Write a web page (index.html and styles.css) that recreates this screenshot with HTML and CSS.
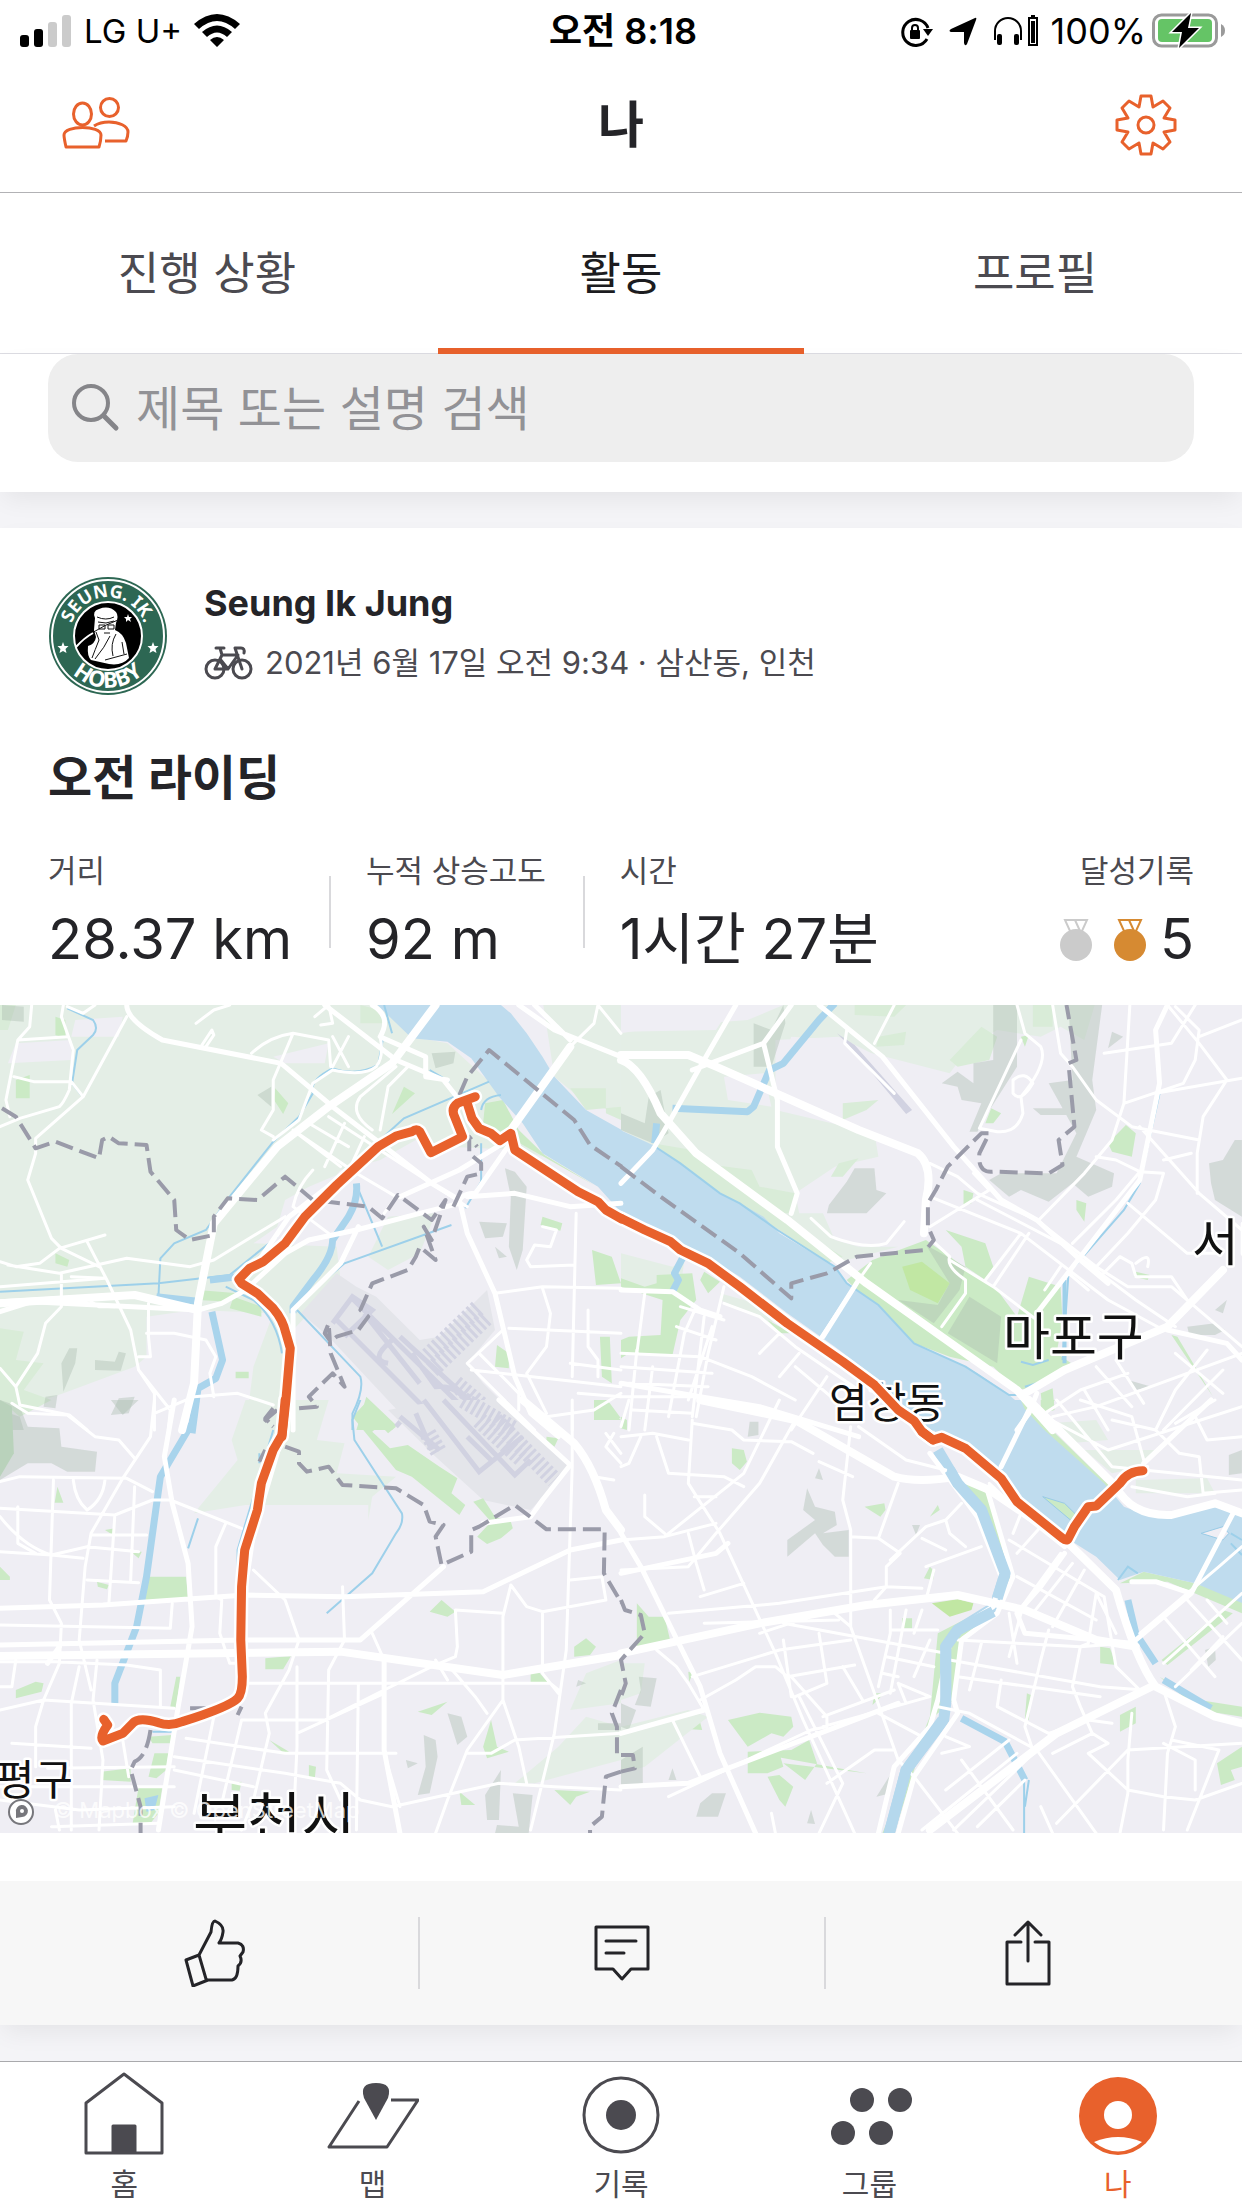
FILE: index.html
```html
<!DOCTYPE html>
<html lang="ko">
<head>
<meta charset="utf-8">
<meta name="viewport" content="width=device-width, initial-scale=1">
<title>나</title>
<link rel="stylesheet" href="styles.css">
</head>
<body>
<div class="status">
  <div class="status-side">
    <svg width="52" height="34" viewBox="0 0 52 34" aria-hidden="true"><rect y="21" width="9" height="12" rx="3"/><rect x="14" y="15" width="9" height="18" rx="3"/><g fill="#cbcbcb"><rect x="28" y="8" width="9" height="25" rx="3"/><rect x="42" y="1" width="9" height="32" rx="3"/></g></svg>
    <span class="carrier">LG U+</span>
    <svg width="46" height="34" viewBox="0 0 46 34" aria-hidden="true"><path d="M0 10Q23-10 46 10L41 15Q23-1 5 15ZM8 18Q23 5 38 18L33 23Q23 14 13 23ZM16 26Q23 20 30 26L23 33Z"/></svg>
  </div>
  <span class="clock">오전 8:18</span>
  <div class="status-side right">
    <svg width="32" height="34" viewBox="0 0 32 34" aria-hidden="true"><path d="M26 25A13 13 0 1 1 27 14" fill="none" stroke="#000" stroke-width="3"/><path d="M22 15H32L27 22Z"/><rect x="9" y="16" width="10" height="9" rx="1"/><path d="M11 17V14A3 3 0 0 1 17 14V17" fill="none" stroke="#000" stroke-width="2"/></svg>
    <svg class="arrow" width="28" height="34" viewBox="0 0 28 34" aria-hidden="true"><path d="M26 4Q28 3 27 6L18 30Q16 33 15 29V18H2Q-1 17 2 15Z"/></svg>
    <svg width="46" height="34" viewBox="0 0 46 34" aria-hidden="true"><path d="M2 26V17A13 13 0 0 1 28 17V26" fill="none" stroke="#000" stroke-width="2"/><rect x="4" y="20" width="5" height="11" rx="2"/><rect x="21" y="20" width="5" height="11" rx="2"/><rect x="36" y="4" width="8" height="27" fill="none" stroke="#000" stroke-width="2"/><rect x="38" y="7" width="4" height="22"/><rect x="38" y="1" width="4" height="2"/></svg>
    <span class="percent">100%</span>
    <svg class="battery" width="74" height="36" viewBox="0 0 74 36" aria-hidden="true"><rect x="1.500" y="2" width="63" height="31" rx="8" fill="none" stroke="#9a9a9a" stroke-width="3"/><rect x="6" y="6" width="54" height="23" rx="4" fill="#65c466"/><path d="M69 11Q73 13 73 17.500T69 24Z" fill="#9a9a9a"/><path d="M39 0L20 19H30L27 35L47 15H36Z" stroke="#fff" stroke-width="3" paint-order="stroke"/></svg>
  </div>
</div>

<header class="topbar">
  <button class="icon-button" type="button" aria-label="친구">
    <svg width="68" height="64" viewBox="0 0 68 64" fill="none" stroke="#e8612c" stroke-width="3" stroke-linejoin="round"><ellipse cx="20.500" cy="21" rx="9" ry="11"/><ellipse cx="47.500" cy="14.500" rx="9" ry="9"/><path d="M4 54Q2 45 2 42C2 32 39 32 39 42Q39 48 37 54ZM32 33Q38 29 47 29C57 29 66 33 66 39Q66 43 64 48H43"/></svg>
  </button>
  <h1>나</h1>
  <button class="icon-button" type="button" aria-label="설정">
    <svg width="62" height="62" viewBox="-31 -31 62 62" fill="none" stroke="#e8612c" stroke-width="3" stroke-linejoin="round"><path d="M-5-29H5L7-18L17-24L24-17L18-7L29-5V5L18 7L24 17L17 24L7 18L5 29H-5L-7 18L-17 24L-24 17L-18 7L-29 5V-5L-18-7L-24-17L-17-24L-7-18Z"/><circle r="8"/></svg>
  </button>
</header>

<nav class="tabs">
  <a href="#progress">진행 상황</a>
  <a href="#activity" class="current" aria-current="page">활동</a>
  <a href="#profile">프로필</a>
</nav>

<main>
  <form class="search" role="search">
    <label class="search-box">
      <svg width="50" height="50" viewBox="0 0 50 50" fill="none" stroke="#858589" stroke-linecap="round" aria-label="검색"><circle cx="19" cy="20" r="17" stroke-width="4"/><path d="M32 33L44 45" stroke-width="5"/></svg>
      <input type="search" placeholder="제목 또는 설명 검색">
    </label>
  </form>

  <article class="card">
    <div class="athlete">
      <svg class="avatar" width="120" height="120" viewBox="0 0 120 120" aria-hidden="true">
        <defs><path id="arc-top" d="M22.300 64A38 38 0 1 1 97.700 64"/><path id="arc-bottom" d="M14 84A52 52 0 0 0 106 84"/></defs>
        <circle cx="60" cy="60" r="59" fill="#2d6753"/><circle cx="60" cy="60" r="56" fill="none" stroke="#fff" stroke-width="2"/>
        <circle cx="60" cy="60" r="34" fill="#000" stroke="#fff" stroke-width="2"/>
        <text class="badge-text"><textPath href="#arc-top" startOffset="50%" text-anchor="middle">SEUNG. IK.</textPath></text>
        <text class="badge-text large"><textPath href="#arc-bottom" startOffset="50%" text-anchor="middle">HOBBY</textPath></text>
        <g fill="#fff"><path d="M15 66l1.500 4h4l-3 3 1 4-3.500-2-3.500 2 1-4-3-3h4z"/><path d="M105 66l1.500 4h4l-3 3 1 4-3.500-2-3.500 2 1-4-3-3h4z"/><path d="M80 38l1 3h3l-2 2 1 3-3-2-2 2v-3l-2-2h3z"/>
        <path d="M47 42Q44 35 51 33Q61 29 68 36Q71 40 68 47L67 54Q75 57 78 67L81 82Q74 90 61 88L43 84Q39 80 40 70Q47 68 48 61L46 54Z"/></g>
        <path d="M28 71Q43 54 70 44M49 41Q58 45 66 41M50 46L58 47L66 45M51 49h6v4h-6zM60 49h6v4h-6zM56 57h6M48 56L51 64Q47 74 44 82M62 60Q57 71 47 83M68 58Q62 68 65 80M57 84L79 78M74 66L76 78" fill="none" stroke="#111"/>
        <path d="M28 71Q36 62 45 57" fill="none" stroke="#fff" stroke-width="2"/>
      </svg>
      <div class="athlete-text">
        <strong>Seung Ik Jung</strong>
        <div class="meta">
          <svg width="50" height="36" viewBox="0 0 50 36" fill="none" stroke="#4b4a50" stroke-width="3" stroke-linecap="round" stroke-linejoin="round" aria-label="라이딩"><circle cx="11" cy="24" r="9"/><circle cx="38" cy="24" r="9"/><path d="M11 24L18 10H34L24 24ZM18 10L16 3M12 3H20M24 24L16 14M38 24L31 3H37Q41 3 40 8"/></svg>
          <span>2021년 6월 17일 오전 9:34 · 삼산동, 인천</span>
        </div>
      </div>
    </div>
    <h2>오전 라이딩</h2>
    <div class="stats">
      <div class="stat"><span class="stat-label">거리</span><span class="stat-value">28.37 km</span></div>
      <div class="stat"><span class="stat-label">누적 상승고도</span><span class="stat-value">92 m</span></div>
      <div class="stat"><span class="stat-label">시간</span><span class="stat-value">1시간 27분</span></div>
      <div class="stat achievements"><span class="stat-label">달성기록</span>
        <span class="stat-value medals">
          <svg width="34" height="44" viewBox="0 0 34 44" fill="#cbcbcb" aria-hidden="true"><circle cx="17" cy="27" r="16"/><path d="M6 2H28L23 13H11ZM16 2L21 13" fill="none" stroke="#cbcbcb" stroke-width="2"/></svg>
          <svg width="34" height="44" viewBox="0 0 34 44" fill="#d68a32" aria-hidden="true"><circle cx="17" cy="27" r="16"/><path d="M6 2H28L23 13H11ZM16 2L21 13" fill="none" stroke="#d68a32" stroke-width="2"/></svg>
          <span>5</span>
        </span>
      </div>
    </div>

    <svg class="map" viewBox="0 0 1242 828" role="img" aria-label="라이딩 경로 지도">
      <rect width="1242" height="828" fill="#efeef4"/>

      <!-- Land cover, one group per map tile -->
      <g transform="translate(0 -5) scale(.396 .33333)">
        <path class="grass" d="M0 0H960L1040 110L1130 130L1240 250L1310 390L1370 470L1320 450L1130 440L1050 420L960 480L900 500L780 560L720 600L700 680L640 730L850 740L860 840L740 990L700 1290H620L640 1100L690 940L490 930L370 950V1070L340 1100L160 1180L60 1220L0 1130ZM1370 0H1568V340L1480 310L1400 230ZM980 650L1100 640L1060 760L980 810L930 770Z"/>
        <path fill="#efeef4" d="M190 60L310 50L300 110L180 110ZM40 130L180 120V180L20 190ZM690 170L830 130L820 190L720 190ZM860 510L980 480L1030 500L960 590L800 600Z"/>
        <path class="meadow" d="M0 985L60 995L40 1080L110 1090L60 1170L130 1200L50 1250L0 1200ZM910 15L960 30L980 70H910ZM1440 265H1530V340L1568 360V320L1480 330ZM0 15L40 15L20 90L0 90Z"/>
        <path class="park" d="M140 50L165 60V115L140 105ZM40 240L75 225L75 295L40 295ZM695 265L728 310L715 342L692 300ZM1020 260L1048 280L990 342ZM1225 310L1270 300L1310 390L1375 465L1500 555L1290 415L1220 370ZM500 870L600 880L580 905L500 900ZM590 890L660 920V950L580 925ZM1495 750L1545 770L1568 850L1505 855ZM140 760L175 780L170 800L140 790ZM1370 650L1420 670L1415 692L1365 675ZM1255 1035L1285 1060V1105L1250 1100ZM595 1115H628V1135H595ZM925 1190L1000 1275L990 1290H900ZM1515 1010H1540L1545 1150L1520 1130ZM1510 1200L1540 1210L1568 1255L1520 1250Z"/>
        <path class="hill" d="M5 15L60 20V65L5 60ZM1090 160L1150 155L1145 190L1100 205ZM650 285L685 260V320ZM1275 505L1300 515L1330 560L1320 750L1305 810L1285 740L1290 590ZM1210 665L1280 670L1270 710L1225 715ZM1250 740L1280 770L1260 775ZM175 1045H195L190 1090L160 1175L155 1090ZM240 1080L290 1085L300 1055L318 1060L305 1112L240 1110ZM115 1190L145 1185L140 1225L110 1220ZM300 1195L340 1190L325 1240L280 1245ZM0 1230L50 1250L60 1290H0Z"/>
        <path class="airport" d="M850 820L900 860L950 890L1060 1020L1110 1010L1230 870L1250 990L1180 1090L1220 1150L1340 1290H1050L830 1010L760 940Z"/>
        <path class="runway" d="M885 890L1320 1400M850 960L1220 1400M840 970L890 890L940 930L870 1010M1010 1010L1350 1380M990 1020Q930 1080 980 1090M1040 1060L1100 1160Q1180 1150 1210 1290M920 940L1060 1150M1010 1250L1110 1350M1030 1240L1000 1280"/>
        <path class="apron" d="M1070 1080L1210 920M1090 1110L1230 950M1150 1150L1290 1290M1180 1240L1260 1290"/>
      </g>
      <g transform="translate(621 -5) scale(.396 .33333)">
        <path class="grass" d="M0 100L100 80L320 60L440 0H1200L1170 120L1110 80L1060 110L950 90L880 140L830 220L700 180L600 150L560 120L430 110L400 200L390 330L640 400L650 470L540 500L440 580L450 640L510 640L540 720L600 740L700 740L540 790L350 650L150 480L0 390ZM250 880L400 930L380 970L250 900ZM130 800L160 780L150 870H0V760Z"/>
        <path fill="#efeef4" d="M0 15H280L240 90L0 95ZM390 120L550 110L700 200L800 260L760 320L670 310L550 340L500 300L390 300ZM260 230L360 220L380 320L270 300Z"/>
        <path class="meadow" d="M590 15H720L690 50L590 45ZM650 110L720 95L715 135L645 140ZM830 180L910 80L950 110L930 180L850 200ZM1040 15H1090V80H1040ZM200 490L330 510L350 560L440 580L430 640L390 640ZM80 430L180 450L400 650L560 770L520 790L400 690L240 570ZM550 490L600 475L560 530L530 530ZM560 310L650 300L620 330L560 360Z"/>
        <path class="park" d="M635 780L770 720L950 870L1000 950L1030 830L1110 860L1115 960L1100 1060L1150 1100L1050 1160L1000 1170L940 1100L830 1070L740 1030L620 900L570 840ZM820 690L920 730L940 800L920 840L870 800L860 740ZM865 570L890 580L885 610L865 615ZM1230 430L1275 375L1300 400L1290 470L1240 455ZM920 370L935 325L960 340L940 370ZM1150 600L1175 610L1170 665L1150 630ZM90 825L180 820L190 900L150 960L130 1065L20 1060L0 1075V1020L20 1010L100 1005L105 900L0 860V835L60 860L90 850ZM210 815L250 845L220 880L200 840ZM1300 815L1335 825L1330 840L1295 830ZM1390 1005L1405 1010L1495 1190ZM1060 1180L1090 1165L1095 1230L1065 1240ZM370 960L430 1000L400 1000ZM1010 110L1030 105L1020 140Z"/>
        <path fill="#c1e7a3" d="M710 800L760 785L830 850L800 910L730 870Z"/>
        <path class="hill" d="M0 340L60 370L70 290L100 270L120 400L80 430L0 390ZM335 70L380 90L410 15L415 70L380 200H335ZM940 15H1000L1000 200L920 350L900 395H880L910 310L860 300L850 260L810 250L850 215L890 250L890 190L940 180ZM1130 15H1215L1190 240L1200 330L1150 470L1245 520L1240 560L1180 590L1140 550L1080 605L1010 570L980 590L930 540L960 520L1100 520L1150 400L1080 250L1140 240ZM590 505H640L645 570L670 580L620 640H520L525 615L570 545ZM770 735L870 800L855 870L790 970L700 900L800 915L830 850ZM880 890L960 950L950 1090L825 1000ZM1485 490L1520 480L1550 420H1568V650L1500 600L1490 550ZM1430 980L1500 970L1525 990L1500 1005H1435ZM1500 930L1530 900L1520 940ZM1240 95L1268 110L1230 145ZM1280 1140L1340 1160L1300 1170ZM1040 325H1125V345H1060Z"/>
        <path fill="#d1d2e1" d="M545 100L590 135L735 330L720 342L575 135Z"/>
      </g>
      <g transform="translate(0 395) scale(.396 .33333)">
        <path class="grass" d="M620 0H830L800 120L870 130L850 220L1000 230L940 290L930 360V315H620L490 340L600 180L585 120ZM1480 950L1568 980V1080L1350 1150L1300 1150L1410 1040ZM1480 820L1568 780V910L1440 930Z"/>
        <path class="hill" d="M0 0L50 20L70 80L150 85L155 140L245 155L240 215L170 215L130 190L70 190L0 240ZM280 0H350L310 45ZM1070 1005L1100 1020L1105 1070L1085 1180L1055 1185L1075 1100ZM1130 940L1165 950L1180 1010L1155 1035ZM1025 1080L1055 1090L1030 1105ZM1225 1185L1265 1110L1260 1260H1230ZM1295 1180L1345 1185L1335 1300H1250L1255 1275L1310 1280ZM1510 970H1568V990H1510ZM1460 840L1480 850L1455 860Z"/>
        <path fill="#b9d2bb" d="M0 0L30 20L35 160L0 230Z"/>
        <path class="airport" d="M980 30L1120 0H1280L1440 200L1340 330L1220 300L1100 170Z"/>
        <path class="runway" d="M1070 0L1210 215L1320 110M1120 0L1300 225L1340 180M1010 50L1110 150M1050 40L1090 150M1180 110L1240 180"/>
        <path class="apron" d="M1170 0L1300 90M1250 60L1400 240M1210 60L1320 180M1080 100L1110 160"/>
        <path class="park" d="M930 0L1000 80L980 100L960 75L940 95L985 145L1030 135L1110 200L1155 235L1140 280L1175 315L1160 345L1040 230L1000 210L890 50ZM1195 305L1220 295L1250 350L1290 365L1295 385L1265 415L1230 432L1205 410L1240 365ZM145 260L160 308H138ZM370 530H470L475 600L360 605ZM1380 110L1410 115L1400 140L1380 120ZM0 500L25 530V540H0ZM330 455H358L350 475ZM245 545L275 555L270 568L247 560ZM265 390L290 385L285 405ZM1085 635L1115 600L1150 635L1130 650ZM670 775L735 768L715 808H670ZM1450 740L1480 715L1505 740L1490 765L1450 770ZM40 870L90 845L110 850L105 875L40 895ZM445 830H455L445 925L430 920ZM1340 820L1360 815L1385 850L1340 848ZM1055 935L1130 905L1090 945ZM1240 960L1255 1040L1285 1055L1230 1075L1220 1040ZM680 1020L730 1055L715 1058ZM375 1010L435 1005L430 1030L385 1030ZM390 1060H425L420 1110L395 1135L375 1130ZM255 1115L330 1105V1145L255 1140ZM350 1160H410L400 1240L380 1270H335ZM585 1150L610 1145L605 1172L585 1170ZM780 1095L798 1100L795 1135H780ZM1400 1170L1490 1175L1455 1190L1440 1215ZM1160 1175L1200 1215L1165 1215ZM1500 0H1535L1550 40L1568 60H1500Z"/>
      </g>
      <g transform="translate(621 395) scale(.396 .33333)">
        <path class="park" d="M0 50L15 60V90L0 85ZM1060 0H1095L1080 35H1060ZM280 145L310 150L318 185L300 210L280 190ZM780 350L800 315L805 330ZM615 320L665 310L668 330L655 350ZM765 535L780 500L792 515L788 540ZM40 610L70 650L110 650L125 725L40 740ZM710 655H735V685H710ZM1210 740L1235 745L1250 795L1210 790ZM270 960L350 938L430 950L435 980L410 1010L380 1000L320 1040ZM320 1055L430 1050L475 1020L495 1090L465 1140L410 1090L620 1120ZM320 1055L400 1060L410 1100L370 1120H320ZM370 1130L400 1125L435 1160L415 1220L400 1200ZM100 960L195 945L205 990L140 985ZM640 880L665 880L635 915ZM1025 880L1035 885L1030 960L1020 955ZM1260 945L1300 920L1300 970L1260 995ZM1505 1090L1568 1040V1100L1540 1110L1550 1140L1515 1155ZM1365 780L1520 630L1545 640L1380 795ZM170 815L182 820L172 845Z"/>
        <path class="grass" d="M1080 70L1200 60L1230 120L1130 130ZM1170 150L1350 150L1320 200L1240 220ZM0 980L170 930L220 950L60 1100L0 1120ZM0 790L60 790L50 880L0 900ZM1300 240L1480 235L1500 280L1300 280Z"/>
        <path fill="#cbeac5" d="M1010 0L1270 300L1200 245L1160 190L1010 30ZM1260 550L1320 515L1450 550L1568 600V640L1380 545ZM850 230L930 280L980 480L985 560L940 650L860 710L840 900L780 960L690 1300H660L780 950L800 700L930 620L970 520L900 320ZM1360 830L1460 900L1568 920V950L1460 930Z"/>
        <path fill="#c1e7a3" d="M785 610L850 598L890 610L885 630L830 650Z"/>
        <path class="hill" d="M420 470V420L490 360L460 330L470 265L490 320L540 335L545 375L510 400L575 390V470H540L510 435L490 400ZM325 65H347V105L320 110ZM490 235L500 205L510 240ZM735 375H755L745 405ZM45 830L90 835L75 920L35 915L50 870ZM0 910L38 930L20 990L0 980ZM190 1250L200 1210L230 1180L265 1180L245 1250ZM645 1190L685 1115L680 1180ZM470 1270L480 1230L490 1272ZM120 1140L130 1105L140 1140ZM1475 750L1500 740L1502 780L1483 800ZM1535 165L1568 150V220L1535 225ZM0 1080L55 1040V1150L0 1160Z"/>
      </g>

      <!-- Rivers and streams -->
      <g transform="translate(0 -5) scale(.396 .33333)">
        <path class="water" d="M940 0L1040 115L1130 125L1190 175L1260 290L1320 370L1370 460L1510 560L1570 640V390L1480 330L1400 230L1370 170L1330 100L1290 40L1250 0Z"/>
        <path class="stream" d="M170 25L235 60Q250 85 235 105L195 150L182 250L205 285M970 15L990 100M968 110L955 195Q900 230 840 205Q780 240 790 280L755 350L690 425L580 590L520 690L440 730L405 775L400 890M1085 210L1135 245M1235 245L1020 355L960 420M1215 330Q1220 290 1265 285M1215 430L1215 545L1175 625M0 875L400 850L580 825L700 710M750 930L910 1130Q920 1170 890 1240V1290M740 920L870 790L1140 675M900 555L965 740M570 860L640 900Q700 960 712 1060"/>
        <path class="channel" d="M395 890L510 905M530 840L600 830M900 550Q905 600 880 650L840 720Q840 770 790 840L740 920V940M535 935L562 1080L545 1135L500 1165L485 1300"/>
      </g>
      <g transform="translate(621 -5) scale(.396 .33333)">
        <path class="water" d="M-2 390L80 435L150 490L250 580L300 610L360 650L400 700L540 800L570 850L650 915L740 1030L870 1100L900 1120L980 1185L1010 1215L1070 1292H760L700 1200L640 1130L540 1040L420 940L300 830L230 780L140 740L-2 640Z"/>
        <path class="channel" d="M540 10L500 60L410 190L375 210L335 320L320 335L130 325M155 775L135 820L145 840L130 875M90 370L85 430"/>
        <path class="stream" d="M80 435L150 490L250 580L300 610L395 690L540 800L570 850L650 915L740 1030L870 1100L980 1185H1010M1360 280L1330 440L1310 550L1270 630L1130 820L1115 1080M1010 1085L1040 1095L1080 1080M1020 1160L1050 1150"/>
        <path class="stream wide" d="M1120 840V1090"/>
      </g>
      <g transform="translate(0 395) scale(.396 .33333)">
        <path class="channel" d="M495 0L485 70L405 230L370 530L345 680L290 850V910"/>
        <path class="stream" d="M910 0L890 60L895 120L1015 340Q1020 370 1000 400L940 520L825 640M500 355L475 445M690 90L640 290L600 450V520M385 995H435M655 160V190"/>
        <path fill="#a9d4ec" d="M365 1195L400 1185L390 1230L370 1235Z"/>
      </g>
      <g transform="translate(621 395) scale(.396 .33333)">
        <path class="water" d="M750 0H1010L1020 30L1060 80L1220 250L1270 320L1340 350L1420 340L1480 310L1570 330V610L1450 550L1320 515L1260 540L1200 470L1140 425L1120 420L1000 300L940 210L850 140L800 110Z"/>
        <path fill="#cbeac5" stroke="#99cbe6" d="M1065 290L1120 310L1150 345L1135 360Z"/>
        <path fill="#efeef4" stroke="#99cbe6" d="M1465 400L1520 380L1535 400L1520 420Z"/>
        <path class="river" d="M800 150L850 250L910 330L970 520L945 620L850 690L820 740V910L815 960L720 1110L675 1310"/>
        <path class="channel" d="M860 955L970 1025L1020 1140M1280 600L1300 700L1350 790M1370 840L1490 925"/>
        <path class="stream" d="M1018 1140V1300M1030 1140L1020 1220M1255 540L1280 500L1305 520M1540 400L1568 420M1540 430L1568 465"/>
      </g>

      <!-- Minor roads -->
      <g class="road">
        <g transform="translate(0 -5) scale(.396 .33333)">
          <path d="M80 15L75 80L45 120L15 300L25 350M160 15L155 50L185 150L175 270Q160 310 150 320L50 355L0 380M45 120L170 110M35 230L85 245H180L210 290L90 415V460L70 540L130 715L155 745L250 800M320 50L210 290M170 20L210 40L240 15M635 160Q680 110 740 100L830 120L835 200M740 100L690 240L690 330L660 390L690 410M495 70L540 30L580 15M510 135L535 90L540 105L520 140M795 50L830 15L840 70L810 75M960 110Q970 170 950 200Q920 230 840 210L790 250L755 360L690 420M840 110L880 200M880 110L840 200M1030 200L980 260L960 390M1000 200L910 290Q880 340 940 390M780 370L880 440M750 400L860 500M870 370L820 500M920 410L870 540M740 390L900 520L1000 590L970 640M830 350L1180 620M1000 470L1090 550M790 510Q750 560 740 620L830 700M720 650L540 780L480 800L320 775L150 820L20 795M0 785L40 800L100 790L150 745L265 705M220 725L270 840L330 990L350 1110L390 1180V1290M155 820V920L115 970L95 1060L40 1160L50 1215L175 1245L220 1290M0 1105L40 1160M0 860L265 835L180 830M375 910V1010L380 1070H350M370 1000H440L520 1020L545 1070L530 1120L540 1190M230 905L250 920H290M390 1240L490 1190L600 1180L690 1215M425 1290L430 1230L350 1110M1568 100L1510 15M1510 15L1500 70L1440 140M1370 680L1405 690L1390 740L1350 735L1330 780L1340 800L1450 795M1455 640L1445 1130M1250 880L1370 860L1568 865M1370 865L1390 940L1380 1040L1330 1120L1380 1240M1285 985L1568 1000M1485 930V1040L1510 1080V1130M1440 1090L1568 1110M1190 1110L1568 1160M1180 1090L1270 990M1180 1090L1350 1290M1210 1060L1310 1180V1230M1460 1180L1568 1190M1380 1250L1500 1230L1568 1180M1445 1230V1290"/>
        </g>
        <g transform="translate(621 -5) scale(.396 .33333)">
          <path d="M570 90L565 130L690 280M640 130L690 15M1000 15L1020 100L1060 140Q1080 190 1010 290L1015 340Q1000 400 950 395L905 385L1010 120M990 240Q1020 210 1040 250Q1010 310 990 280ZM1090 15L1110 160L1140 200L1200 300L1290 380L1460 420M1285 15L1270 310L1240 420L1170 520L1055 660M1220 160L1390 130L1450 15M1380 15L1460 130L1530 240L1470 350L1455 460V580M1400 20L1460 90L1450 180L1420 250L1270 310M1460 110L1568 60M1350 280L1568 235M1310 380L1460 580L1568 690M1200 470L1250 480L1310 515L1370 520L1350 600L1280 700L1200 800M1310 515L1250 600L1140 730M1370 480L1440 460M780 490L850 530L900 580L1050 660L1200 800L1280 860H1390L1568 1040M780 590L1010 700L1230 900L1370 990M780 680L930 570L890 520M900 600L1110 730L1300 900L1400 980M940 860L1030 700M1010 700L920 840M1280 610L1430 760H1500M1070 870L1110 800M1130 820L1180 870M1210 830L1260 770L1290 790L1300 830L1390 830L1430 900M1300 790Q1340 750 1330 800M480 655L530 710Q620 750 670 730L715 665M785 720L830 770Q820 800 870 840V880L810 980M630 790L600 840L500 1020M830 780L940 860L1050 960M60 880L40 1060M260 860L250 910L220 1060L190 1250M260 910L350 950L440 1040L600 1170M520 1130L430 1290M400 1000L350 1060M450 1060L400 1130M440 1100L530 1190M150 920L260 960M140 980L240 1020M190 920L160 1000L120 1250M210 950L180 1250M230 980L170 1200M0 1060L200 1070L330 1130L440 1200M0 1100L230 1120M20 1150L220 1160M0 1190L200 1190M30 1230L180 1240M40 1050L20 1290M80 1100L60 1290M1090 1250L1200 1220L1568 1060M1170 1170L1230 1290M1200 1100L1290 1220M1250 1080L1320 1210M1070 1240L1160 1170L1280 1120M1480 1050L1400 1170L1350 1290M1520 1110L1370 1290M1400 1060L1520 1180"/>
        </g>
        <g transform="translate(0 395) scale(.396 .33333)">
          <path d="M0 245L50 230L320 235L385 275M0 325L290 345L385 300H430L610 385M30 10L70 40L170 45L240 110L300 120L340 175M390 0L380 110L310 235L230 400L215 500L200 720L230 870M135 240L125 600L155 670L150 790L110 900L90 980V1100M185 240Q190 300 220 330Q260 300 265 240M0 350Q60 440 130 465L220 440L350 455M45 320V430L90 460M0 455L130 465L210 475M220 540L350 548M340 260L330 540M290 345L275 610M235 405H370M570 370L545 440V590L560 600L555 700L580 790H610M0 675L430 685L435 610M0 785H140L320 795L405 810V920M0 860H30L40 780M0 930L110 900L440 925M245 780L235 900L260 1080L250 1290M200 800L180 910V1290M30 1030L230 1045M120 1105L440 1100M0 1160H440M130 1280L400 1270M0 1200L200 1230L440 1220M310 1020L325 1130M640 510L720 600L755 720L730 810L670 940L680 1000L640 1200L610 1290M865 560L870 720L830 810L825 1110L860 1200M750 800V1040L740 1290M905 850L900 1290M970 780V1060L1010 1220M630 850H1390L1410 870M610 960H820L970 870L1090 800L1150 770L1155 740L1150 630L1270 640M750 1000L970 880M470 1015L720 1060H1000M440 1070L720 1120L860 1150L910 1200L990 1220L1260 1150L1400 1160L1568 1170M440 1110L640 1160M540 950L490 1240M610 960L560 1210M940 700L970 780M1290 555L1270 650V900L1240 950L1180 1050L1130 1200L1100 1300M1290 555L1330 620L1370 635L1530 600L1520 530L1440 540M1370 635V820L1410 880M1135 800L1200 890L1230 940M1270 900L1310 1040L1330 1150M1180 1060H1240L1300 1020L1568 1000M1445 0V200L1430 750L1400 1000L1340 1290M1100 780L1130 840M1530 100L1568 160M1550 100L1530 140L1568 190M1500 230L1550 240M150 1290L140 1230"/>
        </g>
        <g transform="translate(621 395) scale(.396 .33333)">
          <path d="M20 0L0 80M0 110L80 100L170 120M180 60L170 250L250 400L390 760L460 960L590 1300M50 110L20 190L0 200M90 110L120 220L260 230L310 260M180 70L280 90L310 120L430 125L485 160M60 285V350L110 400M185 290H240M440 60L350 250L240 400L170 500L0 510M0 420L110 410L240 370M200 590L310 550M400 0L310 220L110 410M580 80L560 300L580 390V680L640 880L700 1080L740 1130M580 410L650 415L700 250M650 415L705 460L670 500V560L640 600M585 230L500 185M860 310L820 360L770 380L680 480M820 360L830 400L870 440M760 415L820 450M770 500L910 440M790 510L770 600M600 80L720 180L820 210M120 640L400 610L670 560L760 565M210 670L550 660M350 700L530 630L580 680M410 670L820 760M500 700L520 850L440 890M170 400L190 490L210 570M90 750L140 800L170 850L210 930M180 830L400 750L580 720M200 900L290 840L340 800H390L420 830L590 795M560 800L610 900M410 720L430 890M430 830L520 950M510 950L690 870M510 980L780 890L700 850M520 950V980L480 990L120 1190M680 630V700L650 860M720 630L680 880M760 630L740 700M680 690H800M670 770L790 800M660 820L700 830M780 720L740 830M700 850L720 910M650 940L760 1010M520 1150L640 1050H690M380 1240L390 1300M500 1300L560 1150L450 890M130 960L200 1130M830 780L1210 860L1320 870M850 830L1210 890M850 720L1160 740L1270 730M910 730L880 870M980 640L1000 790M1010 640L980 770M1080 690L1060 780L1020 980L1040 1050M1160 740L1140 860L1160 920L1190 1000L1090 1060M1200 580L1180 730L1160 740M1220 590L1250 800L1310 870M960 840L950 920L1080 1000M800 920L880 940L1050 1050L1200 1300M740 1130L850 1300M860 1080L990 1290M820 1010L880 1040L810 1060M980 1020L820 1170M1000 1060L760 1290M1060 1220L1090 1300M1050 1050L840 1290M1020 1140L900 1280M1080 1000L1180 960L1240 970M1190 1000L1230 1030L1180 1060L1280 1170L1370 1190L1450 1200L1568 1150M1100 1270L1280 1050L1568 1030M1290 940L1280 1080V1180L1260 1300M1370 870L1400 980L1380 1060L1370 1290M1390 1020L1510 1050L1430 1290M1370 1030L1450 1080V1170M1000 530L1200 660M980 420L1220 590M1110 460L1000 640M1140 490L1040 640M1170 510L1090 680M1200 580L1250 700M1060 380L1000 460M1310 700L1510 500L1568 440M1370 790L1568 580M1400 860L1568 670M1370 650L1500 830M1430 600L1568 780M1480 600L1530 670M1520 710L1440 810M1070 50L1230 150L1568 20M1100 0L1240 200L1568 240M1160 0L1290 50L1320 180M1240 60L1350 90L1410 160L1460 170L1470 280L1568 270M1290 260L1430 290L1500 280M1330 200L1180 330M1400 70L1500 0M1450 50L1480 120L1568 110M930 250L1010 340L990 400"/>
        </g>
      </g>

      <!-- Main roads -->
      <g class="road main">
        <g transform="translate(0 -5) scale(.396 .33333)">
          <path d="M320 15Q320 60 410 120L710 190L840 320L960 430L1090 550L1160 600L1180 700L1250 880L1300 1130L1340 1240L1410 1310M820 15L1000 180L1120 240L1160 300M940 15Q990 50 960 110L1075 170V230L1130 240M0 905L330 885L500 930L560 910L620 870L720 760L780 720L900 690L1060 640L1160 610M1180 590L1300 580L1440 620L1568 610M1310 15L1400 90L1568 170M1350 15L1440 120M740 930V1290M905 680L860 790L740 930M620 840L730 650L850 540M1160 600Q1170 580 1200 580L1300 410M1010 590L1160 510L1270 430M0 935L80 905L500 930"/>
          <path class="trunk" d="M1100 15L990 190L830 320L700 440L540 670L500 910L490 1150L460 1290M0 910L340 885L500 930M1290 390L1440 140"/>
        </g>
        <g transform="translate(621 -5) scale(.396 .33333)">
          <path d="M290 15L200 200L120 370L80 450L0 550M430 15L360 130L180 210M360 130L395 300V440L445 580L430 640M500 15L660 170L840 440L960 600L1050 660L1160 780L1230 850M1380 15L1350 90L1360 250L1310 540L1050 940M600 840L510 1010M0 870L130 875L200 930L250 950M0 1150L200 1190L350 1220L600 1310M1380 990L1530 1030L1568 1080M1050 1180L1030 1240L1000 1290"/>
          <path class="trunk" d="M0 165H170L240 200L600 390L750 460Q790 500 770 600L765 700M0 180Q50 200 100 340L190 460L420 660L620 850L940 1120L1000 1170L1090 1290M1520 810L1380 980L1120 1110L1020 1180"/>
        </g>
        <g transform="translate(0 395) scale(.396 .33333)">
          <path d="M440 0L415 170L435 310L475 490L485 680L450 920L400 1290M0 625L260 615L620 585L870 590L1220 575L1440 450L1568 420M0 735L610 720H910L1120 500M1260 0L1440 195L1370 300L1340 350L1220 370M730 0L700 160L640 400L625 520M970 780V1050L1010 1300M120 790L150 740"/>
          <path class="trunk" d="M0 768L860 755L1270 825L1568 765M1320 0L1450 130Q1500 200 1530 330L1568 390"/>
        </g>
        <g transform="translate(621 395) scale(.396 .33333)">
          <path d="M780 160L850 270L900 350L960 530L940 620L860 680L830 730L800 900L780 980L690 1100L650 1300M925 270L990 530L950 640L860 720L840 900L850 940L740 1130L700 1300M0 520L240 460L270 430M0 1000L120 960L210 930M0 1160L170 1150L480 1010L700 910M930 260L1120 440M1550 330L1440 580L1290 730M1290 545H1350L1440 580M1320 190L1490 0M960 200L1030 30M1000 640L1020 700L1290 730M0 400L50 500L200 860L250 1060L340 1300M1120 460L1060 560L1000 640"/>
          <path class="trunk" d="M1030 0L1250 260Q1290 350 1390 345L1500 310L1568 340M0 760L350 670L620 615L850 585L1020 630L1200 720L1300 740M200 0L440 60L690 230Q750 250 850 230L930 270L1130 430L1250 570Q1300 780 1350 860L1500 950L1568 970M1340 860L1100 1000L780 1290"/>
        </g>
      </g>

      <!-- River channel drawn between its two embankment roads -->
      <g transform="translate(621 395) scale(.396 .33333)">
        <path class="river" d="M830 210L850 250L910 330L970 520L950 595M940 635L850 690L820 740V905M812 960L720 1110L675 1310"/>
      </g>

      <!-- District borders -->
      <g class="border">
        <path transform="translate(0 -5) scale(.396 .33333)" d="M5 325L40 350L90 445L140 425L250 475L258 420L275 410L300 430L370 435L380 515L440 600L445 690L480 720L540 705V650L575 595L650 600L720 530L790 600L930 620L965 655L1005 585L1090 660L1125 600L1090 720L1070 680L1100 780L1060 740L1050 770L1030 810L940 850L910 930L930 950L905 990L850 1010L835 1025L820 1000L830 970L835 1060L870 1160L840 1120L780 1190L800 1220L750 1225M1145 620L1180 530L1215 520V490L1185 460V410L1205 440M1160 285L1180 230L1235 150L1450 360L1490 435L1570 500M690 1225L670 1255L690 1280"/>
        <path transform="translate(621 -5) scale(.396 .33333)" d="M0 500L100 590L300 760L430 895V850L520 820L595 770L770 750L790 720L775 680V610L795 570L825 500L910 400L930 400L905 460Q900 520 940 515L1080 520L1115 495L1105 420L1145 380L1130 190L1150 180L1125 15"/>
        <path transform="translate(0 395) scale(.396 .33333)" d="M700 30L670 60L690 80M655 185L670 150M720 140L755 155V190L775 215L830 200L865 255L1000 265L1070 315L1085 365L1120 375L1100 410L1115 495L1190 455V390L1210 380L1300 315L1380 388H1527L1525 520L1570 610M380 990Q370 1070 340 1085L330 1110L355 1220V1300M600 945L610 920M480 925H520M1568 870L1545 940L1558 980V1060M1568 1115L1530 1130L1520 1250L1490 1280V1300"/>
        <path transform="translate(621 395) scale(.396 .33333)" d="M0 600L10 630L50 645L60 700L0 780L12 850L0 890M0 1065H30L35 1105L0 1115"/>
      </g>

      <g class="place">
        <text x="1003" y="350" font-size="51">마포구</text>
        <text x="1192" y="256" font-size="51">서대문구</text>
        <text x="829" y="413" font-size="42">염창동</text>
        <text x="73" y="790" font-size="42" text-anchor="end">부평구</text>
        <text x="193" y="836" font-size="59">부천시</text>
      </g>

      <!-- Recorded route: white casing under the orange line -->
      <defs>
        <g id="route">
          <path transform="translate(0 -5) scale(.396 .33333)" d="M1200 290L1155 310Q1138 325 1148 350L1168 410L1088 458L1060 395Q1052 385 1040 395L1000 408L955 440L850 555L770 650L720 730L665 785L630 805L603 838L610 850L650 880L690 925Q715 960 722 1000L733 1045L722 1200L712 1310M1180 310L1192 355L1210 385L1240 400L1262 422L1290 400L1300 450L1460 575L1510 605L1530 630L1570 657"/>
          <path transform="translate(621 -5) scale(.396 .33333)" d="M0 655L60 690L125 725L150 750L220 790L300 860L420 970L560 1085L640 1155L700 1230L740 1262L760 1295L788 1320"/>
          <path transform="translate(0 395) scale(.396 .33333)" d="M720 0L712 105L690 150L660 250L650 330L618 450L610 560L608 720L612 830Q612 880 600 895Q580 920 460 965Q430 980 400 968Q350 950 335 970L310 1000L260 1023Q250 1010 272 975L262 958"/>
          <path transform="translate(621 395) scale(.396 .33333)" d="M760 95L788 120L810 112L870 145L960 235L1000 305L1115 415Q1125 425 1130 415L1145 380L1180 320L1200 318L1260 250Q1280 212 1318 212"/>
        </g>
      </defs>
      <use href="#route" class="route-casing"/>
      <use href="#route" class="route-line"/>

      <circle cx="21" cy="807" r="12" fill="#fff" stroke="#77777c" stroke-width="2"/><path d="M16 813V807A6 6 0 1 1 22 812Z" fill="#77777c"/><circle cx="22" cy="806" r="2" fill="#fff"/>
      <text class="credit" x="53" y="813">© Mapbox © OpenStreetMap</text>
    </svg>

    <div class="actions">
      <button type="button" aria-label="좋아요"><svg width="62" height="68" viewBox="0 0 62 68"><path d="M2 41L15 36L27 13Q28 2 31 2Q40 6 39 13Q38 20 35 24H54Q61 26 59 33L56 37Q59 43 54 47Q54 60 48 61H24L9 67ZM15 36L22 60"/></svg></button>
      <button type="button" aria-label="댓글"><svg width="58" height="58" viewBox="0 0 58 58"><path d="M3 3H55V45H38L29 55L20 45H3ZM13 17H43M13 29H31"/></svg></button>
      <button type="button" aria-label="공유"><svg width="48" height="68" viewBox="0 0 48 68"><path d="M17 23H3V65H45V23H31M24 42V3M11 16L24 3L37 16"/></svg></button>
    </div>
  </article>
</main>

<nav class="bottom">
  <a href="#home"><svg width="92" height="84" viewBox="0 0 92 84" fill="none" stroke="#4b4a50" stroke-width="3" stroke-linejoin="round"><path d="M8 31L46 2L84 31V81H8Z"/><rect x="35" y="54" width="22" height="26" fill="#4b4a50"/></svg>홈</a>
  <a href="#map"><svg width="92" height="84" viewBox="0 0 92 84" fill="none" stroke="#4b4a50" stroke-width="3" stroke-linejoin="round"><path d="M32 29L2 75H60L91 28H64"/><path d="M49 48L37 26Q32 11 49 11Q66 11 61 26Z" fill="#4b4a50" stroke="none"/></svg>맵</a>
  <a href="#record"><svg width="92" height="84" viewBox="0 0 92 84"><circle cx="46" cy="43" r="37" fill="none" stroke="#4b4a50" stroke-width="3"/><circle cx="46" cy="43" r="15" fill="#4b4a50"/></svg>기록</a>
  <a href="#groups"><svg width="92" height="84" viewBox="0 0 92 84" fill="#4b4a50"><circle cx="39" cy="28" r="12"/><circle cx="77" cy="28" r="12"/><circle cx="20" cy="61" r="12"/><circle cx="58" cy="61" r="12"/></svg>그룹</a>
  <a href="#me" class="current" aria-current="page"><svg width="92" height="84" viewBox="0 0 92 84"><circle cx="46" cy="44" r="39" fill="#e8612c"/><circle cx="46" cy="43" r="14" fill="#fff"/><path d="M22 70Q46 60 70 70Q46 89 22 70Z" fill="#fff"/></svg>나</a>
</nav>
</body>
</html>
```
FILE: styles.css
```css
* { box-sizing: border-box; }

body {
  margin: 0;
  min-height: 100vh;
  display: flex;
  flex-direction: column;
  background: #f4f4f7;
  color: #242428;
  font-family: Inter, "Noto Sans CJK KR", sans-serif;
}

svg { display: block; flex: none; }
h1, h2 { margin: 0; }
a { color: inherit; text-decoration: none; }
button { padding: 0; border: 0; background: none; color: inherit; font: inherit; }

/* Status bar */
.status {
  display: grid;
  grid-template-columns: 1fr auto 1fr;
  align-items: center;
  height: 60px;
  padding: 2px 16px 0 20px;
  background: #fff;
  color: #000;
  font-size: 36px;
  line-height: 40px;
}
.status-side { display: flex; align-items: center; gap: 12px; }
.status-side .arrow { margin: 0 4px; }
.status-side .battery { margin-left: -6px; }
.status-side.right { justify-content: flex-end; }
.carrier { font-size: 33px; }
.percent { font-size: 36px; }
.clock { font-weight: 600; }

/* Title bar */
.topbar {
  display: flex;
  align-items: center;
  justify-content: space-between;
  height: 133px;
  padding: 0 62px 2px;
  border-bottom: 1px solid #b2b2b5;
  background: #fff;
}
.topbar h1 { font-size: 50px; line-height: 60px; font-weight: 700; }
.icon-button { display: flex; justify-content: center; width: 68px; }

/* Section tabs */
.tabs {
  display: grid;
  grid-template-columns: repeat(3, 1fr);
  height: 161px;
  border-bottom: 1px solid #dcdce2;
  background: #fff;
  color: #4b4a50;
  font-size: 45px;
}
.tabs a {
  display: flex;
  align-items: center;
  justify-content: center;
  margin: 0 24px -1px;
  border-bottom: 6px solid transparent;
}
.tabs .current { border-color: #e8612c; color: #1c1c20; }

/* Search */
.search {
  padding: 0 48px 30px;
  background: #fff;
  box-shadow: 0 10px 24px -4px rgba(0, 0, 0, .07);
}
.search-box {
  display: flex;
  align-items: center;
  gap: 14px;
  height: 108px;
  padding: 0 24px;
  border-radius: 30px;
  background: #eee;
}
.search-box input {
  flex: 1;
  min-width: 0;
  padding: 0;
  border: 0;
  outline: 0;
  background: none;
  color: #242428;
  font: inherit;
  font-size: 48px;
}
.search-box input::placeholder { color: #929296; opacity: 1; }

/* Activity card */
.card {
  margin: 36px 0;
  background: #fff;
  box-shadow: 0 10px 24px -4px rgba(0, 0, 0, .07);
}
.athlete { display: flex; align-items: center; gap: 36px; padding: 48px 48px 0; }
.badge-text { fill: #fff; font-family: "Noto Sans", sans-serif; font-weight: 700; font-size: 18px; }
.badge-text.large { font-size: 22px; }
.athlete-text { display: flex; flex-direction: column; gap: 10px; padding-bottom: 8px; }
.athlete strong { font-size: 36px; line-height: 52px; font-weight: 700; }
.meta { display: flex; align-items: center; gap: 11px; color: #4b4a50; font-size: 31px; line-height: 48px; }
.card h2 { padding: 52px 48px 0; font-size: 48px; line-height: 60px; font-weight: 700; }

.stats { display: flex; padding: 40px 48px 28px; }
.stat { position: relative; display: flex; flex-direction: column; gap: 8px; }
.stat + .stat:not(.achievements) { margin-left: 74px; }
.stat + .stat:not(.achievements)::before {
  content: "";
  position: absolute;
  left: -37px;
  top: 28px;
  width: 2px;
  height: 72px;
  background: #d9d9dc;
}
.stat-label { color: #4b4a50; font-size: 31px; line-height: 46px; }
.stat-value { font-size: 56px; line-height: 75px; white-space: nowrap; }
.achievements { margin-left: auto; align-items: flex-end; }
.medals { display: flex; align-items: center; gap: 20px; }
.medals span { margin-left: -7px; }

/* Route map */
.map { width: 100%; height: auto; overflow: hidden; }
.map path { vector-effect: non-scaling-stroke; }
.grass { fill: #e4eee6; }
.meadow { fill: #d9ecd8; }
.park { fill: #cbeac5; }
.hill { fill: #a9bbae; fill-opacity: .4; }
.airport { fill: #e4e5ea; }
.runway { fill: none; stroke: #d1d2e1; stroke-width: 5; }
.apron { fill: none; stroke: #d1d2e1; stroke-width: 17; stroke-dasharray: 3 3; }
.water { fill: #bfdcee; }
.stream { fill: none; stroke: #9dd0ea; stroke-width: 2; }
.stream.wide { stroke-width: 4; }
.channel { fill: none; stroke: #a9d4ec; stroke-width: 7; stroke-linejoin: round; }
.river { fill: none; stroke: #b5d8ed; stroke-width: 11; stroke-linejoin: round; }
.road { fill: none; stroke: #fff; stroke-width: 3; stroke-linejoin: round; stroke-linecap: round; }
.road.main { stroke-width: 5; }
.trunk { stroke-width: 8; }
.border { fill: none; stroke: #9a9ba9; stroke-width: 4; stroke-dasharray: 18 7; stroke-linejoin: round; }
.place {
  fill: #111;
  stroke: #fff;
  stroke-width: 5;
  stroke-linejoin: round;
  paint-order: stroke;
  font-family: "Noto Sans CJK KR", sans-serif;
}
.route-casing, .route-line { fill: none; stroke-linecap: round; stroke-linejoin: round; }
.route-casing { stroke: #fff; stroke-width: 14; }
.route-line { stroke: #e8612c; stroke-width: 9; }
.credit { fill: #fff; fill-opacity: .8; font-size: 22px; }

/* Card actions */
.actions {
  display: grid;
  grid-template-columns: repeat(3, 1fr);
  margin-top: 48px;
  padding: 36px 12px;
  background: #f7f7f7;
}
.actions button {
  display: flex;
  align-items: center;
  justify-content: center;
  height: 72px;
}
.actions button + button { border-left: 2px solid #d9d9dc; }
.actions svg { fill: none; stroke: #242428; stroke-width: 3; stroke-linejoin: round; stroke-linecap: round; }

/* Bottom navigation */
.bottom {
  position: relative;
  display: grid;
  grid-template-columns: repeat(5, 1fr);
  margin-top: auto;
  padding: 10px 0 2px;
  border-top: 1px solid #a9a9ac;
  background: #fff;
  color: #4b4a50;
  font-size: 30px;
  line-height: 44px;
}
.bottom a { display: flex; flex-direction: column; align-items: center; gap: 6px; }
.bottom .current { color: #e8612c; }
```
